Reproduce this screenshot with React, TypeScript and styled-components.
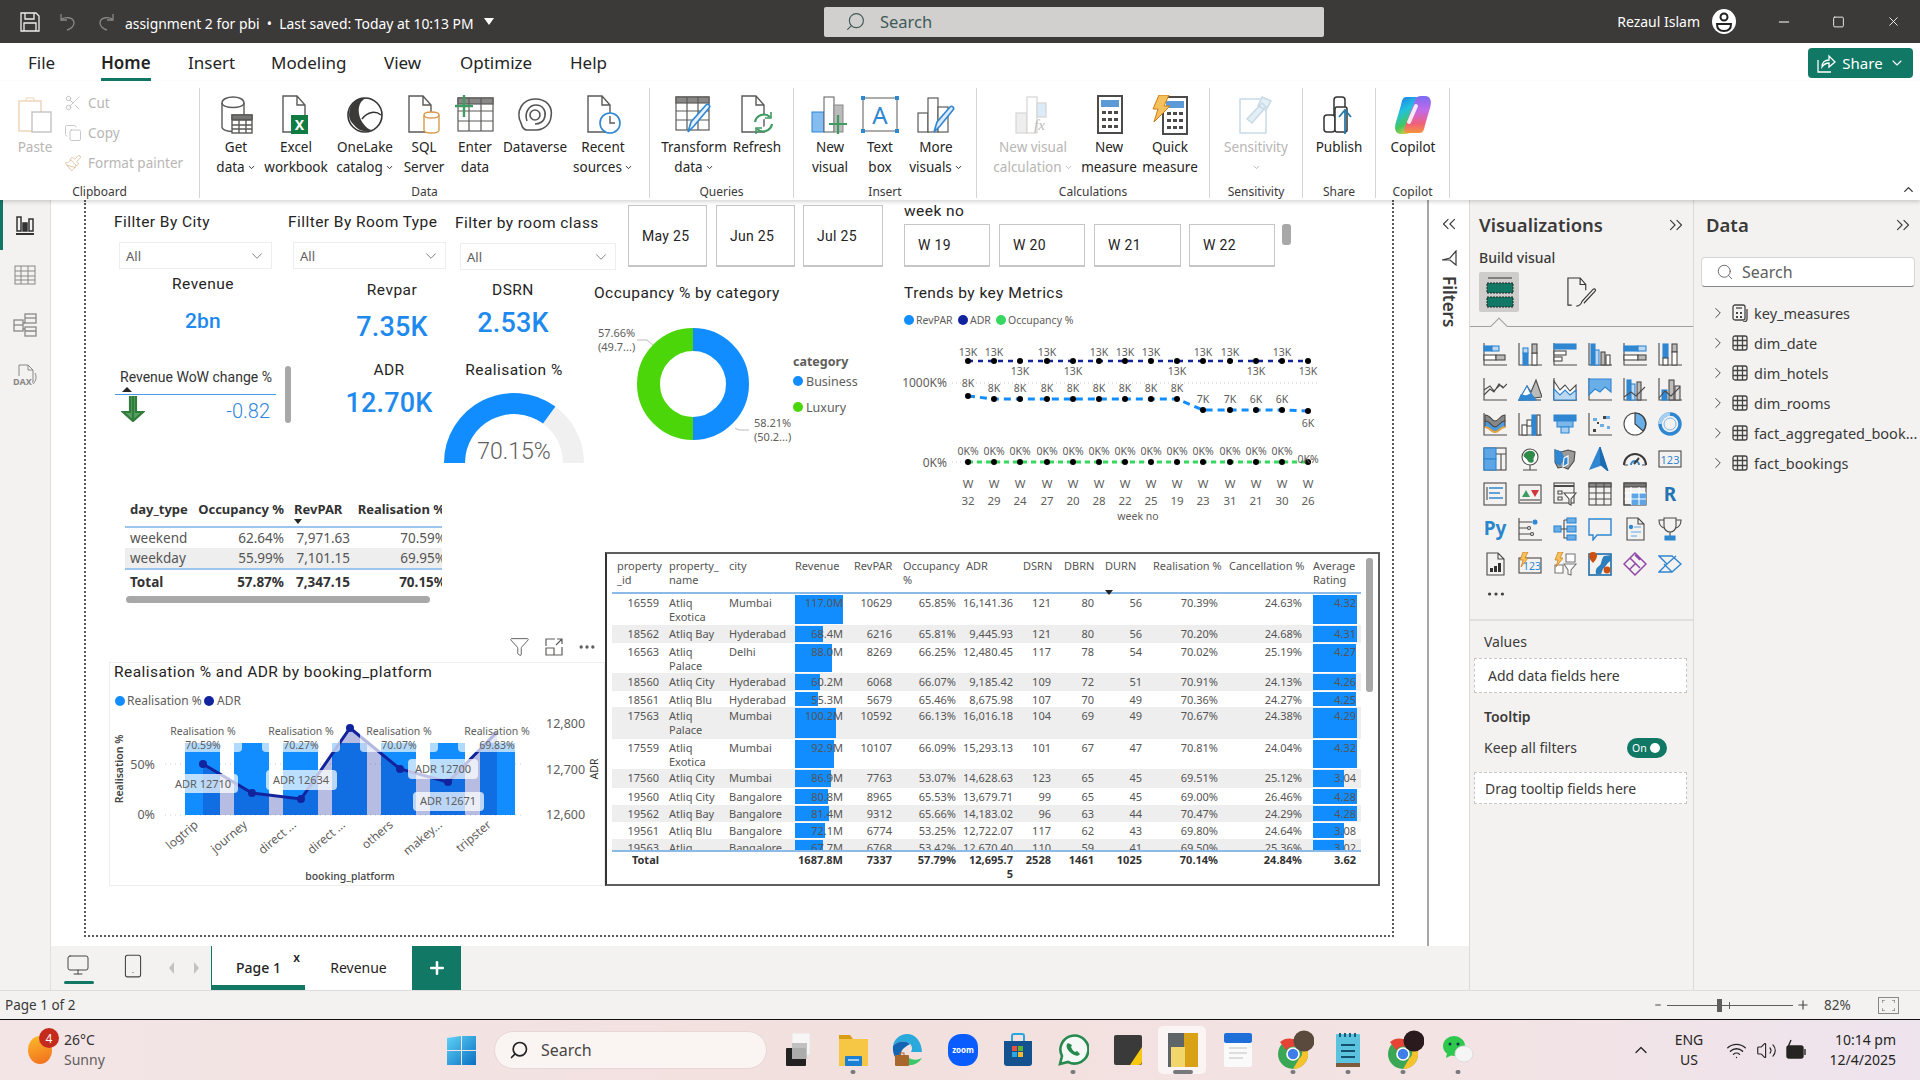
import React from "react";
import styled, { createGlobalStyle } from "styled-components";
import { Search, ChevronDown, ChevronRight, ChevronsRight, ChevronsLeft, ChevronUp, Funnel, Plus, Scissors, Copy, Paintbrush, Monitor, Smartphone, Wifi, Volume2, Minus, X, Square, Ellipsis } from "lucide-react";

const UI = `"Noto Sans","Open Sans","Liberation Sans",sans-serif`;
const DIN = `Roboto,"Liberation Sans",sans-serif`;
const GREEN = "#117865";
const BLUE = "#118dff";

const Global = createGlobalStyle`
  html,body{margin:0;padding:0;width:1920px;height:1080px;overflow:hidden;background:#fff;font-family:${UI};color:#252423;}
  *{box-sizing:border-box;}
`;
const Shell = styled.div`width:1920px;height:1080px;display:flex;flex-direction:column;overflow:hidden;`;

/* Title bar */
const TitleBar = styled.header`height:43px;flex:none;background:#3b3a39;display:flex;align-items:center;color:#fff;`;
const TitleLeft = styled.div`width:824px;flex:none;display:flex;align-items:center;padding-left:20px;`;
const DocTitle = styled.span`font-size:13.9px;margin-left:10px;margin-top:4px;white-space:nowrap;width:350px;`;
const Caret = styled.span`margin-left:9px;width:0;height:0;border-left:5px solid transparent;border-right:5px solid transparent;border-top:7px solid #fff;`;
const QAT = styled.span<{ $ml: number; $w: number }>`display:flex;margin-left:${p => p.$ml}px;width:${p => p.$w}px;flex:none;`;
const TitleSearch = styled.div`width:500px;height:30px;flex:none;background:#d2d0ce;border-radius:2px;display:flex;align-items:center;padding-left:21px;gap:14px;color:#3f5a58;font-size:16.5px;`;
const TitleRight = styled.div`flex:1;display:flex;align-items:center;justify-content:flex-end;padding-right:19px;`;
const UserName = styled.span`font-size:14px;margin-right:12px;white-space:nowrap;`;
const Avatar = styled.span`width:24px;height:25px;border-radius:50%;background:#fff;display:flex;align-items:center;justify-content:center;margin-right:40px;`;
const WinBtn = styled.span<{ $w: number; $mr: number }>`width:${p => p.$w}px;margin-right:${p => p.$mr}px;display:flex;justify-content:center;color:#fff;`;

/* Tabs */
const TabsRow = styled.nav`height:38px;flex:none;background:#fff;display:flex;padding-left:28px;`;
const Tab = styled.div<{ $w: number }>`width:${p => p.$w}px;flex:none;`;
const TabLabel = styled.span<{ $on?: boolean }>`display:inline-block;height:38px;line-height:40px;font-size:17px;color:#252423;font-weight:${p => (p.$on ? 600 : 400)};border-bottom:3px solid ${p => (p.$on ? GREEN : "transparent")};`;
const ShareBtn = styled.div`margin-left:auto;margin-right:7px;margin-top:5px;width:105px;height:30px;background:${GREEN};border-radius:4px;color:#fff;display:flex;align-items:center;justify-content:center;gap:6px;font-size:15px;`;

/* Ribbon */
const Ribbon = styled.section`height:119px;flex:none;background:#fff;display:flex;padding-top:7px;position:relative;z-index:2;box-shadow:0 2px 4px rgba(0,0,0,.16);`;
const Group = styled.div<{ $w: number; $pad?: number }>`width:${p => p.$w}px;flex:none;height:110px;border-right:1px solid #d6d4d2;display:flex;flex-direction:column;padding-left:${p => p.$pad ?? 6}px;`;
const GroupItems = styled.div`flex:1;display:flex;`;
const GroupLabel = styled.div`height:12px;line-height:12px;text-align:center;font-size:12px;color:#3b3a39;margin-left:-6px;`;
const RItem = styled.div<{ $w: number; $off?: boolean }>`width:${p => p.$w}px;flex:none;display:flex;flex-direction:column;align-items:center;padding-top:5px;color:${p => (p.$off ? "#b8b6b4" : "#252423")};`;
const RIcon = styled.div`height:44px;display:flex;align-items:center;justify-content:center;`;
const RLine = styled.div`height:20px;line-height:20px;font-size:13.5px;white-space:nowrap;display:flex;align-items:center;gap:2px;`;
const ClipList = styled.div`display:flex;flex-direction:column;`;
const ClipRow = styled.div`height:30px;display:flex;align-items:center;gap:6px;font-size:13.5px;color:#b8b6b4;white-space:nowrap;`;
const Collapse = styled.div`position:absolute;right:4px;bottom:3px;color:#323130;display:flex;`;

/* Body */
const Body = styled.main`height:790px;flex:none;display:flex;`;
const Rail = styled.aside`width:51px;flex:none;background:#f3f2f1;border-right:1px solid #e1dfdd;display:flex;flex-direction:column;`;
const RailItem = styled.div<{ $on?: boolean }>`height:50px;display:flex;align-items:center;justify-content:center;border-left:3px solid ${p => (p.$on ? GREEN : "transparent")};padding-right:3px;`;
const Center = styled.div`width:1418px;flex:none;display:flex;flex-direction:column;`;
const CanvasRow = styled.div`height:746px;display:flex;`;
const Canvas = styled.div`flex:1;background:#fff;padding-left:33px;overflow:hidden;`;
const Page = styled.div`width:1310px;height:737px;position:relative;border:2px dotted #5a5a5a;border-top:none;background:#fff;`;
const FilterPane = styled.div`width:42px;flex:none;background:#fff;border-left:2px solid #a8a6a4;display:flex;flex-direction:column;align-items:center;padding-top:13px;color:#3b3a39;`;
const FilterText = styled.div`writing-mode:vertical-rl;font-size:17px;font-weight:600;margin-top:10px;line-height:20px;`;
const FilterIcon = styled.div`margin-top:15px;display:flex;`;

/* Page tabs */
const PageBar = styled.div`height:44px;flex:none;background:#f3f2f1;display:flex;`;
const DeviceBtn = styled.div<{ $w: number; $on?: boolean }>`width:${p => p.$w}px;flex:none;display:flex;flex-direction:column;align-items:center;padding-top:7px;position:relative;`;
const DeviceMark = styled.span`position:absolute;left:13px;top:35px;height:3px;width:30px;background:${GREEN};border-radius:2px;`;
const Arrow = styled.span<{ $flip?: boolean; $w: number }>`width:${p => p.$w}px;flex:none;display:flex;align-items:center;justify-content:center;&::after{content:"";border-top:6px solid transparent;border-bottom:6px solid transparent;${p => (p.$flip ? "border-left:5px solid #c4c2c0;" : "border-right:5px solid #c4c2c0;")}}`;
const PageTab = styled.div<{ $w: number; $on?: boolean }>`width:${p => p.$w}px;flex:none;background:#fff;position:relative;display:flex;align-items:center;justify-content:center;font-size:14px;padding-top:4px;font-weight:${p => (p.$on ? 500 : 400)};border-left:${p => (p.$on ? `1px solid ${GREEN}` : "none")};border-bottom:5px solid ${p => (p.$on ? GREEN : "#fff")};`;
const TabClose = styled.span`position:absolute;right:5px;top:3px;font-size:12px;font-weight:600;`;
const AddTab = styled.div`width:49px;flex:none;background:${GREEN};color:#fff;display:flex;align-items:center;justify-content:center;`;

/* Viz pane */
const VizPane = styled.aside`width:225px;flex:none;background:#f3f2f1;border-left:1px solid #dcdad8;border-right:1px solid #dcdad8;padding-top:13px;display:flex;flex-direction:column;`;
const PaneHead = styled.div<{ $pl: number }>`height:24px;display:flex;justify-content:space-between;align-items:center;padding:0 6px 0 ${p => p.$pl}px;font-size:18.5px;font-weight:600;color:#3b3a39;line-height:24px;`;
const SubHead = styled.div`font-size:14px;font-weight:500;color:#3b3a39;margin:11px 0 0 9px;height:20px;line-height:20px;`;
const BuildRow = styled.div`display:flex;margin:4px 0 0 9px;height:40px;`;
const BuildOn = styled.div`width:40px;height:40px;background:#cfcdcb;border-radius:2px;display:flex;align-items:center;justify-content:center;`;
const BuildDoc = styled.div`width:30px;height:40px;margin-left:48px;display:flex;align-items:center;`;
const Notch = styled.div`height:15px;margin-top:0;position:relative;border-bottom:1px solid #a19f9d;&::after{content:"";position:absolute;left:23px;top:8px;width:11px;height:11px;background:#f3f2f1;border-left:1px solid #a19f9d;border-top:1px solid #a19f9d;transform:rotate(45deg);}`;
const VizGrid = styled.div`margin:15px 0 0 13px;display:grid;grid-template-columns:repeat(6,35px);grid-auto-rows:35px;`;
const VizCell = styled.div`display:flex;`;
const More = styled.div`height:14px;margin-left:15px;margin-top:0;color:#3b3a39;display:flex;align-items:center;`;
const Divider = styled.div`height:20px;border-bottom:2px solid #e1dfdd;`;
const WellLabel = styled.div<{ $b?: boolean; $mt: number }>`margin:${p => p.$mt}px 0 0 14px;font-size:14px;height:20px;line-height:20px;font-weight:${p => (p.$b ? 600 : 400)};color:#3b3a39;`;
const Well = styled.div<{ $h: number; $pl: number; $mt: number }>`margin:${p => p.$mt}px 6px 0 4px;height:${p => p.$h}px;border:1px dashed #c8c6c4;background:#fff;font-size:14px;display:flex;align-items:center;padding-left:${p => p.$pl}px;color:#3b3a39;`;
const KeepRow = styled.div`margin:10px 26px 0 14px;height:21px;display:flex;align-items:center;justify-content:space-between;font-size:14px;color:#3b3a39;`;
const Toggle = styled.div`width:40px;height:20px;border-radius:10px;background:${GREEN};color:#fff;font-size:10.5px;display:flex;align-items:center;padding-left:5px;gap:3px;&::after{content:"";width:10px;height:10px;border-radius:50%;background:#fff;}`;

/* Data pane */
const DataPane = styled.aside`flex:1;background:#f3f2f1;padding-top:13px;display:flex;flex-direction:column;`;
const DataSearch = styled.div`margin:20px 5px 0 7px;height:30px;border:1px solid #d8d6d4;border-bottom-color:#8a8886;border-radius:4px;background:#fff;display:flex;align-items:center;padding-left:14px;gap:8px;color:#605e5c;font-size:16px;`;
const TreeList = styled.div`margin-top:11px;display:flex;flex-direction:column;padding-left:15px;`;
const TreeRow = styled.div`height:30px;display:flex;align-items:center;font-size:14.5px;color:#3b3a39;white-space:nowrap;`;
const TreeIcon = styled.span`margin-left:5px;display:flex;`;
const TreeText = styled.span`margin-left:6px;`;

/* Status + taskbar */
const StatusBar = styled.footer`height:30px;flex:none;background:#f3f2f1;border-top:1px solid #dfdddb;border-bottom:1px solid #111;display:flex;align-items:center;padding-left:5px;font-size:13.5px;color:#3b3a39;`;
const Zoomer = styled.div`margin-left:auto;display:flex;align-items:center;color:#484644;`;
const SliderTrack = styled.div`width:126px;height:1px;background:#605e5c;margin:0 3px 0 5px;position:relative;&::before{content:"";position:absolute;left:50px;top:-6px;width:5px;height:13px;background:#605e5c;}&::after{content:"";position:absolute;left:62px;top:-3px;width:1px;height:7px;background:#605e5c;}`;
const FitBox = styled.div`width:21px;height:17px;margin:0 21px 0 26px;border:1px solid #8a8886;background:#f3f2f1;display:flex;align-items:center;justify-content:center;`;
const Pct = styled.span`margin-left:14px;width:28px;font-size:13.5px;white-space:nowrap;`;
const Taskbar = styled.div`height:60px;flex:none;background:linear-gradient(90deg,#f3e5e6,#f2e0de 45%,#f3e3e3 75%,#eee4ee);display:flex;align-items:center;`;
const Weather = styled.div`width:447px;flex:none;display:flex;align-items:center;padding-left:28px;position:relative;`;
const Sun = styled.span`width:24px;height:28px;border-radius:50%;background:linear-gradient(160deg,#fbbd2c,#f26a1b);position:relative;display:block;`;
const Badge = styled.span`position:absolute;left:11px;top:-8px;width:20px;height:20px;border-radius:50%;background:#c42b1c;color:#fff;font-size:12px;display:flex;align-items:center;justify-content:center;`;
const WeatherText = styled.div`margin-left:12px;font-size:14px;line-height:20px;color:#323130;`;
const Muted = styled.div`color:#605e5c;`;
const StartBtn = styled.div`width:47px;flex:none;display:flex;`;
const SearchPill = styled.div`width:273px;height:38px;flex:none;margin-right:3px;border-radius:19px;background:#faf4f3;border:1px solid #e6d8d6;display:flex;align-items:center;padding-left:14px;gap:12px;font-size:16px;color:#484644;`;
const TaskIcon = styled.div<{ $active?: boolean }>`width:55px;height:60px;flex:none;display:flex;align-items:center;justify-content:center;position:relative;&::before{content:"";position:absolute;left:3px;right:4px;top:6px;bottom:6px;border-radius:5px;background:${p => (p.$active ? "rgba(255,255,255,.62)" : "transparent")};}> svg{position:relative;}`;
const RunDot = styled.span<{ $active?: boolean }>`position:absolute;bottom:6px;left:50%;transform:translateX(-50%);height:4px;width:${p => (p.$active ? 20 : 5)}px;border-radius:3px;background:#77797c;`;
const Tray = styled.div`margin-left:auto;display:flex;align-items:center;padding-right:24px;color:#252423;`;
const TrayLang = styled.div`width:48px;margin:0 8px 0 14px;text-align:center;font-size:14px;line-height:20px;`;
const TraySlot = styled.div<{ $w: number }>`width:${p => p.$w}px;display:flex;justify-content:center;`;
const Clock = styled.div`margin-left:15px;text-align:right;font-size:14px;line-height:20px;width:70px;white-space:nowrap;`;

/* Canvas visuals: free canvas placement */
const Visual = styled.div<{ $x: number; $y: number; $w: number; $h?: number }>`position:absolute;left:${p => p.$x - 86}px;top:${p => p.$y - 200}px;width:${p => p.$w}px;${p => (p.$h ? `height:${p.$h}px;` : "")}`;
const Heading = styled.div<{ $center?: boolean }>`font-family:${DIN};font-size:15.5px;line-height:20px;color:#252423;letter-spacing:.45px;white-space:nowrap;font-weight:400;text-align:${p => (p.$center ? "center" : "left")};`;
const Dropdown = styled.div`height:27px;border:1px solid #eeeeee;display:flex;align-items:center;justify-content:space-between;padding:0 5px 0 6px;font-size:13px;color:#605e5c;`;
const BigValue = styled.div<{ $size: number }>`font-family:${DIN};font-size:${p => p.$size}px;font-weight:500;color:#1f8aee;text-align:center;line-height:1.1;white-space:nowrap;letter-spacing:.2px;`;
const Chip = styled.div`height:100%;border:1px solid #c8c6c4;border-bottom-width:2px;background:#fff;display:flex;align-items:center;padding-left:13px;font-family:${DIN};font-size:14px;color:#252423;letter-spacing:.3px;`;
const WowTitle = styled.div`font-family:${DIN};font-size:14px;line-height:18px;color:#333;padding-left:5px;white-space:nowrap;`;
const WowRow = styled.div`border-top:1px solid #4c9be8;margin-top:8px;height:28px;display:flex;justify-content:space-between;padding:1px 6px 0 6px;font-family:${DIN};font-size:20px;font-weight:300;color:#2f86d8;line-height:30px;`;
const WowUp = styled.span`position:absolute;left:7px;top:19px;width:0;height:0;border-left:5px solid transparent;border-right:5px solid transparent;border-bottom:5px solid #252423;`;
const ThumbV = styled.div`width:100%;height:100%;background:#a8a8a8;border-radius:3px;`;

const SmallWrap = styled.div`width:317px;overflow:hidden;font-size:13.5px;color:#484644;`;
const SmallRow = styled.div<{ $alt?: boolean; $h: number; $line?: boolean; $pb?: number }>`display:grid;grid-template-columns:73px 91px 66px 92px;width:322px;height:${p => p.$h}px;align-items:center;padding-bottom:${p => p.$pb ?? 0}px;background:${p => (p.$alt ? "#eeeeee" : "transparent")};border-bottom:${p => (p.$line ? "2px solid #9cc6ee" : "none")};`;
const SmallCell = styled.div<{ $r?: boolean; $b?: boolean; $pr?: number; $fs?: number }>`white-space:nowrap;position:relative;font-size:${p => p.$fs ?? 13.5}px;padding:${p => (p.$r ? `0 ${p.$pr ?? 5}px 0 0` : "0 0 0 5px")};text-align:${p => (p.$r ? "right" : "left")};font-weight:${p => (p.$b ? 700 : 400)};color:${p => (p.$b ? "#333" : "#555")};`;
const SortMark = styled.span`position:absolute;left:5px;bottom:-6px;width:0;height:0;border-left:4px solid transparent;border-right:4px solid transparent;border-top:5px solid #252423;`;
const HScroll = styled.div`height:7px;width:304px;margin:3px 0 0 1px;border-radius:4px;background:#a8a8a8;`;

const BigTable = styled.div`width:100%;height:100%;border:2px solid #5f5f5f;border-left-color:#333;padding-left:5px;font-size:11px;color:#555;position:relative;background:#fff;`;
const BigRow = styled.div<{ $h: number; $alt?: boolean }>`display:grid;grid-template-columns:49px 64px 70px 50px 52px 64px 57px 38px 43px 48px 76px 90px 48px;width:749px;height:${p => p.$h}px;background:${p => (p.$alt ? "#eeeeee" : "transparent")};line-height:14px;`;
const BigHead = styled(BigRow)`padding-top:5px;border-bottom:2px solid #8bb9e8;`;
const BigCell = styled.div<{ $pl?: number; $pr?: number; $r?: boolean; $b?: boolean }>`position:relative;padding:${p => (p.$b ? 0 : 2)}px ${p => p.$pr ?? 0}px 0 ${p => p.$pl ?? 0}px;text-align:${p => (p.$r ? "right" : "left")};font-weight:${p => (p.$b ? 700 : 400)};color:${p => (p.$b ? "#333" : "#555")};white-space:pre-line;overflow:hidden;`;
const HeadCell = styled.div<{ $pl: number }>`padding-left:${p => p.$pl}px;position:relative;white-space:pre-line;`;
const BigBody = styled.div`height:256px;overflow:hidden;`;
const BigTotal = styled(BigRow)`border-top:2px solid #8bb9e8;padding-top:1px;`;
const DataBar = styled.span`position:absolute;left:0;top:1px;bottom:1px;background:${BLUE};`;
const CellText = styled.span`position:relative;`;
const DurnMark = styled.span`position:absolute;left:6px;top:31px;width:0;height:0;border-left:4px solid transparent;border-right:4px solid transparent;border-top:5px solid #252423;`;

const ChartSvg = styled.svg`display:block;overflow:visible;text{font-family:${UI};fill:#605e5c;}`;
const VizIconsRow = styled.div`display:flex;align-items:center;justify-content:space-between;color:#605e5c;`;
const ComboBox = styled.div`width:100%;height:100%;border:1px solid #eeeeee;`;

const st = "#5b5a58";
const blue = "#2f86d1";

const SaveIco = () => <svg width="20" height="20" viewBox="0 0 20 20" fill="none" stroke="#eee" strokeWidth="1.3"><path d="M1 1h15l3 3v15H1z" /><path d="M5 1v6h9V1M4 19v-8h12v8" /></svg>;
const UndoIco = () => <svg width="16" height="18" viewBox="0 0 16 18" fill="none" stroke="#8a8886" strokeWidth="1.3"><path d="M1 1v6h6M1 7c3-4 13-3 13 3 0 3-3 6-7 7" /></svg>;
const RedoIco = () => <svg width="18" height="18" viewBox="0 0 16 18" fill="none" stroke="#8a8886" strokeWidth="1.3"><path d="M15 1v6H9M15 7C12 3 2 4 2 10c0 3 3 6 7 7" /></svg>;
const AvatarIco = () => <svg width="20" height="22" viewBox="0 0 20 22" fill="none" stroke="#222" strokeWidth="2"><circle cx="10" cy="6" r="3.5" /><path d="M3 13h14c0 5-3 7-7 7s-7-2-7-7z" /></svg>;
const ShareIco = () => <svg width="20" height="20" viewBox="0 0 20 20" fill="none" stroke="#fff" strokeWidth="1.3"><path d="M2 7v12h13M6 14c0-5 3-7 7-7V3l6 6-6 5v-4c-3 0-5 1-7 4z" /></svg>;

const PasteIco = () => <svg width="36" height="38" viewBox="0 0 36 38" fill="none"><path d="M2 5h22v30H2z" stroke="#edd5b8" strokeWidth="1.5" /><path d="M9 5V2h8v3" stroke="#edd5b8" /><rect x="15" y="16" width="19" height="20" fill="#fff" stroke="#c8c6c4" strokeWidth="1.5" /></svg>;
const Doc = () => <path d="M5 1h14l8 9v27H5zM19 1v9h8" fill="#fff" stroke={st} strokeWidth="1.4" />;
const GetDataIco = () => <svg width="40" height="40" viewBox="0 0 40 40" fill="none" stroke={st} strokeWidth="1.4"><path d="M6 8c0-8 22-8 22 0v24c0 6-22 6-22 0z" fill="#fff" /><path d="M6 8c0 6 22 6 22 0" /><rect x="16" y="20" width="20" height="18" fill="#fff" /><path d="M16 25h20M16 30h20M16 34h20M23 20v18M30 20v18" /><rect x="16" y="20" width="20" height="4.5" fill="#777" /></svg>;
const ExcelIco = () => <svg width="40" height="40" viewBox="0 0 40 40"><g transform="translate(2 0)"><Doc /></g><rect x="15" y="20" width="17" height="19" fill="#107c41" /><text x="23.5" y="35" textAnchor="middle" fill="#fff" fontSize="14" fontFamily={UI} fontWeight="700">X</text></svg>;
const OneLakeIco = () => <svg width="40" height="40" viewBox="0 0 40 40" fill="none"><circle cx="20" cy="20" r="17" fill="#fff" stroke="#333" strokeWidth="1.6" /><path d="M4 20C4 8 13 3 21 3c-8 4-9 13-5 22 3 6 8 10 11 10-8 3-14 0-18-5-3-3-5-6-5-10z" fill="#3b3a39" /><path d="M17 24c6-8 14-8 19-4" stroke="#333" strokeWidth="1.5" /></svg>;
const SqlIco = () => <svg width="40" height="40" viewBox="0 0 40 40" fill="none"><g transform="translate(0 0)"><Doc /></g><path d="M20 20c0-4 15-4 15 0v15c0 4-15 4-15 0z" fill="#fff" stroke="#d99a4a" strokeWidth="1.4" /><path d="M20 20c0 4 15 4 15 0" stroke="#d99a4a" strokeWidth="1.4" /></svg>;
const EnterIco = () => <svg width="40" height="40" viewBox="0 0 40 40" fill="none" stroke={st} strokeWidth="1.2"><rect x="3" y="3" width="35" height="33" fill="#fff" /><rect x="3" y="3" width="35" height="6" fill="#8a8886" /><path d="M3 16h35M3 26h35M14 3v33M26 3v33" /><path d="M9 0v22M0 11h18" stroke="#3f9b62" strokeWidth="2.4" /></svg>;
const DataverseIco = () => <svg width="40" height="40" viewBox="0 0 40 40" fill="none" stroke="#555" strokeWidth="1.6"><path d="M6 28C0 16 8 4 20 4c12 0 18 8 16 18-1 8-8 13-14 13H12c-3 0-5-3-6-7z" /><path d="M12 26c-3-8 2-16 9-16s10 6 9 11c-1 6-6 8-10 8" /><circle cx="20" cy="20" r="5" /></svg>;
const RecentIco = () => <svg width="40" height="40" viewBox="0 0 40 40" fill="none"><Doc /><circle cx="27" cy="28" r="10" fill="#fff" stroke={blue} strokeWidth="1.6" /><path d="M27 21v7h5" stroke={st} strokeWidth="1.4" /></svg>;
const TransformIco = () => <svg width="40" height="40" viewBox="0 0 40 40" fill="none" stroke={st} strokeWidth="1.2"><rect x="2" y="2" width="33" height="33" fill="#fff" /><rect x="2" y="2" width="33" height="6" fill="#8a8886" /><path d="M2 16h33M2 25h33M13 2v33M24 2v33" /><path d="M14 37l3-10 15-17c2-2 5 1 3 3L20 31z" fill="#e6f1fb" stroke={blue} strokeWidth="1.6" /></svg>;
const RefreshIco = () => <svg width="40" height="40" viewBox="0 0 40 40" fill="none"><Doc /><path d="M18 27a9 9 0 0 1 15-5M35 29a9 9 0 0 1-15 5" stroke="#3f9b62" strokeWidth="2.2" fill="#fff" /><path d="M34 17v6h-6M19 39v-6h6" stroke="#3f9b62" strokeWidth="1.6" /></svg>;
const NewVisualIco = () => <svg width="40" height="40" viewBox="0 0 40 40" fill="none"><rect x="2" y="17" width="12" height="20" fill="#86bdf0" stroke={blue} /><rect x="14" y="2" width="10" height="35" fill="#fff" stroke={st} /><rect x="24" y="10" width="9" height="27" fill="#bbb" stroke="#888" /><path d="M28 20v19M19 29h18" stroke="#3f9b62" strokeWidth="2.2" /></svg>;
const TextBoxIco = () => <svg width="40" height="40" viewBox="0 0 40 40" fill="none"><rect x="3" y="3" width="34" height="33" fill="#fff" stroke={st} /><path d="M1 1h4v4H1zM35 1h4v4h-4zM1 34h4v4H1zM35 34h4v4h-4z" fill={blue} /><text x="20" y="29" textAnchor="middle" fontSize="24" fill={blue} fontFamily={UI}>A</text></svg>;
const MoreVisIco = () => <svg width="40" height="40" viewBox="0 0 40 40" fill="none" stroke={st} strokeWidth="1.2"><rect x="2" y="18" width="10" height="19" fill="#fff" /><rect x="12" y="3" width="10" height="34" fill="#fff" /><rect x="22" y="12" width="10" height="25" fill="#fff" /><path d="M18 37l3-10 13-15c2-2 5 1 3 3L24 31z" fill="#dbeafa" stroke={blue} strokeWidth="1.6" /></svg>;
const CalcVisIco = () => <svg width="40" height="40" viewBox="0 0 40 40" fill="none" stroke="#d8d6d4" strokeWidth="1.2"><rect x="3" y="18" width="11" height="20" fill="#eee" /><rect x="14" y="2" width="10" height="36" fill="#fff" /><rect x="24" y="8" width="9" height="14" fill="#dcebf9" /><text x="21" y="35" fontSize="15" fill="#bbb" stroke="none" fontStyle="italic" fontFamily="Liberation Serif">fx</text></svg>;
const Calc = () => <><rect x="9" y="1" width="24" height="37" fill="#fff" stroke="#4c4b4a" strokeWidth="2" /><rect x="12" y="5" width="18" height="7" fill="#5a9ad6" /><path d="M13 16h4v3h-4zM19 16h4v3h-4zM25 16h4v3h-4zM13 23h4v3h-4zM19 23h4v3h-4zM25 23h4v3h-4zM13 30h4v3h-4zM19 30h4v3h-4zM25 30h4v3h-4z" fill="#4c4b4a" /></>;
const NewMeasureIco = () => <svg width="40" height="40" viewBox="0 0 40 40"><Calc /></svg>;
const QuickIco = () => <svg width="40" height="40" viewBox="0 0 40 40"><g transform="translate(4 1)"><Calc /></g><path d="M9 0h10l-5 11h6L4 27l4-13H3z" fill="#f5c15c" stroke="#cc7a14" /></svg>;
const SensIco = () => <svg width="40" height="40" viewBox="0 0 40 40" fill="none" stroke="#c7dbe6" strokeWidth="1.5"><rect x="4" y="4" width="26" height="34" /><path d="M11 24L26 8l4 4-14 16zM26 2l9 4-5 9-8-4z" fill="#e3eef5" /></svg>;
const PublishIco = () => <svg width="40" height="40" viewBox="0 0 40 40" fill="none" stroke="#333" strokeWidth="1.5"><rect x="15" y="2" width="11" height="34" rx="3" fill="#fff" /><rect x="5" y="20" width="11" height="17" rx="3" fill="#fff" /><rect x="16" y="12" width="12" height="25" rx="2" fill="#fff" /><path d="M26 39V15M20 22l6-7 6 7" stroke="#2a7aa8" strokeWidth="1.8" /></svg>;
const CopilotIco = () => <svg width="40" height="40" viewBox="0 0 40 40"><defs><linearGradient id="cp1" x1="0.2" y1="0" x2="0.6" y2="1"><stop offset="0" stopColor="#1f7fe8" /><stop offset=".35" stopColor="#21c0e0" /><stop offset=".7" stopColor="#46c85a" /><stop offset="1" stopColor="#f5d03c" /></linearGradient><linearGradient id="cp2" x1="0.5" y1="0" x2="0.5" y2="1"><stop offset="0" stopColor="#7a6cf0" /><stop offset=".4" stopColor="#c46ae8" /><stop offset=".75" stopColor="#f0607a" /><stop offset="1" stopColor="#f5953c" /></linearGradient></defs><path d="M13 2h13c4 0 3 4 1 9L18 35c-1 3-3 4-6 4H8C2 39 1 33 3 27L8 10c1-5 2-8 5-8z" fill="url(#cp1)" /><path d="M27 38H14c-4 0-3-4-1-9l9-24c1-3 3-4 6-4h4c6 0 7 6 5 12l-5 17c-1 5-2 8-5 8z" fill="url(#cp2)" /><path d="M16 27l7-16" stroke="#fff" strokeOpacity=".85" strokeWidth="4" strokeLinecap="round" /></svg>;

const ReportIco = () => <svg width="22" height="22" viewBox="0 0 22 22" fill="none" stroke="#333" strokeWidth="1.5"><path d="M2 20h18" strokeWidth="2" /><rect x="3" y="3" width="4" height="14" /><rect x="9" y="9" width="4" height="8" fill="#333" /><rect x="15" y="5" width="4" height="12" /></svg>;
const TableIco = () => <svg width="24" height="22" viewBox="0 0 24 22" fill="none" stroke="#8a8886"><rect x="2" y="2" width="20" height="18" /><path d="M2 7h20M2 12h20M2 16h20M8 2v18M15 2v18" /></svg>;
const ModelIco = () => <svg width="26" height="26" viewBox="0 0 26 26" fill="none" stroke="#8a8886" strokeWidth="1.3"><rect x="2" y="8" width="9" height="11" /><path d="M2 13h9" /><rect x="13" y="2" width="11" height="9" /><path d="M13 6h11" /><rect x="13" y="15" width="11" height="9" /><path d="M13 19h11M11 11h2M11 17h2" /></svg>;
const DaxIco = () => <svg width="26" height="24" viewBox="0 0 26 24" fill="none" stroke="#8a8886"><path d="M7 13V2h9l5 5v12h-1M16 2v5h5M23 10c2 4 1 8-2 11" /><text x="1" y="22" fontSize="9" fontWeight="700" fill="#8a8886" stroke="none" fontFamily={UI}>DAX</text></svg>;

type VB = React.ReactNode;
const V = ({ children }: { children: VB }) => <svg width="24" height="24" viewBox="0 0 24 24" fill="none" stroke="#4b4a48" strokeWidth="1.1">{children}</svg>;
const Ax = () => <path d="M1 1v22h23" />;
const LB = "#bcd7f0";
const viz: VB[] = [
  <><Ax /><rect x="1" y="4" width="8" height="5" fill={blue} stroke={blue} /><rect x="9" y="4" width="7" height="5" fill={LB} stroke={blue} /><rect x="1" y="13" width="12" height="5" fill="#fff" /><rect x="13" y="13" width="9" height="5" fill="#bbb" /></>,
  <><Ax /><rect x="5" y="11" width="5" height="12" fill={blue} stroke={blue} /><rect x="5" y="6" width="5" height="5" fill={LB} stroke={blue} /><rect x="14" y="11" width="5" height="12" fill="#fff" /><rect x="14" y="2" width="5" height="9" fill="#bbb" /></>,
  <><Ax /><rect x="1" y="2" width="22" height="5" fill={blue} stroke={blue} /><rect x="1" y="9" width="12" height="4" fill="#fff" /><rect x="1" y="15" width="8" height="4" fill="#fff" /></>,
  <><Ax /><rect x="3" y="2" width="4" height="21" fill={blue} stroke={blue} /><rect x="7" y="8" width="4" height="15" fill={LB} stroke={blue} /><rect x="13" y="10" width="4" height="13" fill="#bbb" /><rect x="18" y="13" width="4" height="10" fill="#fff" /></>,
  <><Ax /><rect x="1" y="4" width="14" height="5" fill={blue} stroke={blue} /><rect x="15" y="4" width="8" height="5" fill={LB} stroke={blue} /><rect x="1" y="13" width="14" height="5" fill="#fff" /><rect x="15" y="13" width="8" height="5" fill="#bbb" /></>,
  <><Ax /><rect x="5" y="2" width="5" height="14" fill={blue} stroke={blue} /><rect x="5" y="16" width="5" height="7" fill="#fff" /><rect x="14" y="2" width="5" height="8" fill="#bbb" /><rect x="14" y="10" width="5" height="13" fill="#fff" /></>,
  <><Ax /><path d="M1 18l6-6 4 3 5-8 4 4 4-4M1 13l6-4 4 5 6-6 3 2" /></>,
  <><path d="M1 23h22" /><path d="M1 23l8-14 4 6 5-12 6 17z" fill="#bbb" /><path d="M1 23L9 9l7 14z" fill="#fff" stroke={blue} /><path d="M1 23h17l-5-6-5 2-5-1z" fill={blue} stroke={blue} /></>,
  <><Ax /><path d="M1 4l6 9 5-5 5 6 6-6v15H1z" fill="#fff" /><path d="M1 12l6 6 5-5 5 5 6-5v10H1z" fill={LB} stroke={blue} /></>,
  <><Ax /><path d="M1 2h22v13l-6-5-5 5-5-3-6 6z" fill="#6aaee8" stroke={blue} /></>,
  <><Ax /><rect x="4" y="3" width="4" height="20" fill={blue} stroke={blue} /><rect x="8" y="7" width="4" height="16" fill={LB} stroke={blue} /><rect x="14" y="5" width="4" height="18" fill="#bbb" /><path d="M1 20l7-5 5 4 9-9" /></>,
  <><Ax /><rect x="4" y="13" width="5" height="10" fill={blue} stroke={blue} /><rect x="11" y="3" width="5" height="20" fill="#bbb" /><rect x="17" y="9" width="5" height="14" fill="#ddd" /><path d="M1 21l6-7 6 5 9-9" /></>,
  <><Ax /><path d="M2 3c6 0 6 6 10 6s5-6 10-6v6c-5 0-6 6-10 6S8 10 2 9z" fill="#888" /><path d="M2 9c6 0 6 6 10 6s5-6 10-6v6c-5 0-6 5-10 5S8 16 2 15z" fill="#4a9be0" /><path d="M2 15c5 0 6 5 10 5s5-5 10-5" stroke="#e8a33c" strokeWidth="2" /></>,
  <><Ax /><rect x="4" y="13" width="5" height="10" fill="#fff" /><rect x="9" y="8" width="5" height="6" fill="#fff" /><rect x="14" y="3" width="4" height="20" fill={blue} stroke={blue} /><rect x="19" y="3" width="3" height="20" fill="#fff" /></>,
  <><path d="M1 3h22v6H1z" fill={blue} stroke={blue} /><path d="M4 9h16v6H4z" fill="#7db6ea" stroke={blue} /><path d="M8 15h8v6H8z" fill="#a7cff2" stroke={blue} /></>,
  <><Ax /><path d="M5 6h4v3H5zM12 12h4v3h-4zM18 4h4v3h-4zM19 14h3v3h-3z" fill="#6aaee8" stroke="none" /><path d="M5 17h3v3H5zM15 4h3v3h-3zM9 10h2v2H9z" fill="#444" stroke="none" /></>,
  <><circle cx="12" cy="12" r="11" fill="#fff" /><path d="M12 12V1a11 11 0 0 1 8 18z" fill="#6aaee8" stroke="#3b3a39" /></>,
  <><circle cx="12" cy="12" r="10" stroke={blue} strokeWidth="3.4" /><circle cx="12" cy="12" r="6" stroke="#7db6ea" strokeWidth="1" /><path d="M2 12a10 10 0 0 1 10-10" stroke="#a7cff2" strokeWidth="3.4" /></>,
  <><rect x="1" y="1" width="22" height="22" /><rect x="1" y="1" width="12" height="11" fill="#5ea5e6" stroke={blue} /><rect x="1" y="12" width="12" height="11" fill="#5ea5e6" stroke={blue} /><path d="M13 7h10M18 7v16" /></>,
  <><circle cx="12" cy="10" r="8" fill="#fff" /><path d="M6 8c3-4 8-5 10-2s-2 4-1 7-4 3-5 0-4-2-4-5z" fill="#2e8b4a" stroke="#2e8b4a" /><path d="M5 23h14M12 18v5" /></>,
  <><path d="M2 3l6 2 7-2 7 2-1 9-6 8-5-2-5 1-3-6z" fill="#9a9a9a" /><path d="M2 3l6 2 3 6-4 7-4-2z" fill={blue} stroke={blue} /><path d="M11 11l4-2v8l-5 3z" fill={blue} stroke="#fff" /></>,
  <><path d="M12 0L2 22l11-4z" fill={blue} stroke={blue} /><path d="M12 0l8 24-7-6z" fill="#1b6bb0" stroke="#1b6bb0" /></>,
  <><path d="M1 18a11 11 0 0 1 22 0" strokeWidth="2" stroke="#3b3a39" /><path d="M1 18h4M19 18h4" /><path d="M8 18a4 4 0 0 1 8 0" stroke={blue} strokeWidth="2" /><path d="M11 17l5-6" strokeWidth="2" stroke="#3b3a39" /></>,
  <><rect x="1" y="4" width="22" height="16" /><text x="12" y="17" textAnchor="middle" fontSize="11" fill={blue} stroke="none" fontFamily={UI}>123</text></>,
  <><rect x="1" y="1" width="22" height="22" /><path d="M6 6h14M6 11h11M6 16h14" stroke={blue} strokeWidth="1.6" /><path d="M4 5v13" /></>,
  <><rect x="1" y="3" width="22" height="18" /><path d="M2 18h20" /><path d="M8 8l4 7H4z" fill="#3f9b62" stroke="none" /><path d="M13 8h8l-4 7z" fill="#d13438" stroke="none" /></>,
  <><rect x="1" y="1" width="20" height="20" /><path d="M1 4h20" strokeWidth="2" /><path d="M5 9h4v3H5zM5 15h4v3H5z" /><path d="M11 11h12l-5 6v6l-2-1v-5z" fill="#fff" /></>,
  <><rect x="1" y="1" width="22" height="22" /><rect x="1" y="1" width="22" height="4" fill="#8a8886" /><path d="M1 11h22M1 17h22M8 1v22M16 1v22" /></>,
  <><rect x="1" y="1" width="22" height="22" /><rect x="1" y="1" width="22" height="4" fill="#777" /><rect x="8" y="11" width="15" height="12" fill="#5ea5e6" stroke="none" /><path d="M1 11h22M1 17h22M8 5v18M16 5v18" stroke="#fff" /><path d="M1 5v18h7" /></>,
  <text x="12" y="19" textAnchor="middle" fontSize="19" fontWeight="700" fill="#2274b3" stroke="none" fontFamily={UI}>R</text>,
  <text x="12" y="18" textAnchor="middle" fontSize="19" fontWeight="700" fill="#2b86cc" stroke="none" fontFamily={UI}>Py</text>,
  <><Ax /><path d="M1 5h13M1 11h8M1 17h11" /><circle cx="17" cy="5" r="2" fill={blue} stroke={blue} /><circle cx="11" cy="11" r="1.5" /><circle cx="14" cy="17" r="1.5" /></>,
  <><rect x="1" y="9" width="7" height="6" fill="#6aaee8" stroke={blue} /><rect x="14" y="1" width="9" height="5" fill="#6aaee8" stroke={blue} /><rect x="14" y="9" width="9" height="6" fill="#6aaee8" stroke={blue} /><rect x="14" y="18" width="9" height="5" fill="#6aaee8" stroke={blue} /><path d="M8 12h6M11 3v18h3M11 3h3" /></>,
  <path d="M1 2h22v16H9l-4 5v-5H1z" stroke={blue} strokeWidth="1.4" />,
  <><path d="M4 1h11l6 6v16H4zM15 1v6h6" /><circle cx="8" cy="10" r="1.6" fill={blue} stroke={blue} /><path d="M11 10h7M8 15h10M8 19h6" stroke="#5ea5e6" /></>,
  <><path d="M6 1h12v8a6 6 0 0 1-12 0z" /><path d="M6 3H1c0 5 2 7 5 8M18 3h5c0 5-2 7-5 8M12 15v4" /><path d="M7 19h10v4H7z" fill={blue} stroke={blue} /></>,
  <><path d="M4 1h11l6 6v16H4zM15 1v6h6" /><path d="M7 20v-4h3v4zM11 20v-6h3v6zM15 20V11h3v9z" fill="#333" stroke="none" /></>,
  <><rect x="1" y="6" width="22" height="15" /><text x="14" y="18" textAnchor="middle" fontSize="10.5" fill={blue} stroke="none" fontFamily={UI}>123</text><path d="M5 0h5L7 6h3l-7 9 2-7H2z" fill="#f5c15c" stroke="#cc7a14" strokeWidth=".7" /></>,
  <><path d="M13 2h9v8h-9zM2 13h8v8H2zM11 12h12l-5 6v5l-3-1v-4z" stroke="#777" fill="#fff" /><path d="M5 0h5L7 6h3l-7 9 2-7H2z" fill="#f5c15c" stroke="#cc7a14" strokeWidth=".7" /></>,
  <><rect x="1" y="2" width="22" height="21" stroke="#1e6da8" strokeWidth="1.6" /><path d="M8 22c-1-6 2-7 4-9s1-6 4-9l7-1v6c-4 1-5 6-8 8l-2 5z" fill="#2c7fbd" stroke="none" /><circle cx="19" cy="18" r="3.4" fill="#ca5010" stroke="none" /><path d="M5 0a4 4 0 0 1 4 4c0 3-4 7-4 7S1 7 1 4a4 4 0 0 1 4-4z" fill="#ca5010" stroke="none" /></>,
  <path d="M12 1l11 11-11 11L1 12zM7 6l10 10M17 8l-5-5M12 12l-5 5" stroke="#8f47a8" strokeWidth="1.5" />,
  <path d="M1 4h13l9 8-9 8H1l8-8zM9 12l9-8M14 20l-8-8" stroke="#2f86d1" strokeWidth="1.4" />,
];

const DataIco = () => <svg width="16" height="18" viewBox="0 0 16 18" fill="none" stroke="#444" strokeWidth="1.3"><rect x="1" y="2" width="14" height="14" rx="2" /><path d="M1 6.5h14M1 11.5h14M5.5 2v14M10.5 2v14" /></svg>;
const MeasureIco = () => <svg width="16" height="18" viewBox="0 0 16 18" fill="none" stroke="#444" strokeWidth="1.3"><rect x="1" y="1" width="12" height="15" rx="2" /><path d="M4 4h6" /><path d="M4 8h2v2H4zM8 8h2v2H8zM4 12h2v2H4zM8 12h2v2H8z" fill="#444" stroke="none" /><path d="M15 5v10c0 2-2 3-4 3" /></svg>;

const WinIco = () => <svg width="29" height="29" viewBox="0 0 29 29"><defs><linearGradient id="win" x1="0" y1="0" x2="1" y2="1"><stop offset="0" stopColor="#5fd3f7" /><stop offset="1" stopColor="#0a6fc2" /></linearGradient></defs><path d="M0 2l14-2v14H0zM15 0h14v14H15zM0 15h14v14H0zM15 15h14v14H15z" fill="url(#win)" /></svg>;
const TaskView = () => <svg width="28" height="34" viewBox="0 0 28 34"><rect x="8" y="0" width="18" height="22" rx="1" fill="#f7f5f5" stroke="#e8e6e6" /><rect x="2" y="15" width="20" height="18" rx="1" fill="#222" /><rect x="8" y="10" width="15" height="16" fill="#bbb" opacity=".9" /></svg>;
const Explorer = () => <svg width="30" height="34" viewBox="0 0 30 34"><path d="M1 6V2h11l3 4z" fill="#d99c15" /><rect x="1" y="6" width="29" height="27" fill="#f6c744" /><rect x="7" y="23" width="17" height="10" rx="1" fill="#1d7fd1" /><rect x="10" y="26" width="11" height="2" fill="#9ad0f5" /></svg>;
const Edge = () => <svg width="32" height="34" viewBox="0 0 32 34"><path d="M30 20C30 8 23 1 15 1 8 1 2 6 1 13c4-5 12-6 17-2 3 3 2 6 1 8h11z" fill="#2aa9dc" /><path d="M1 13c-1 9 4 18 14 19-5-3-7-8-6-12 1-5 6-7 9-9-5-4-13-3-17 2z" fill="#1464b4" /><path d="M15 32c6 1 12-2 15-7-6 3-11 2-14-1z" fill="#3bc76a" /><rect x="3" y="22" width="14" height="11" rx="1" fill="#a8672d" /><rect x="8" y="20" width="4" height="3" fill="none" stroke="#a8672d" /></svg>;
const Zoom = () => <svg width="30" height="32" viewBox="0 0 30 32"><rect width="30" height="32" rx="13" fill="#0b5cff" /><text x="15" y="19" textAnchor="middle" fontSize="8" fill="#fff" fontFamily={UI} fontWeight="700">zoom</text></svg>;
const Store = () => <svg width="30" height="34" viewBox="0 0 30 34"><path d="M9 8V3a2 2 0 0 1 2-2h8a2 2 0 0 1 2 2v5" fill="none" stroke="#2aa7e0" strokeWidth="2" /><path d="M1 8h28v22a3 3 0 0 1-3 3H4a3 3 0 0 1-3-3z" fill="#13518f" /><rect x="9" y="13" width="5" height="5" fill="#e8523c" /><rect x="15" y="13" width="5" height="5" fill="#5cb532" /><rect x="9" y="19" width="5" height="5" fill="#2aa7e0" /><rect x="15" y="19" width="5" height="5" fill="#f5b82e" /></svg>;
const WhatsApp = () => <svg width="32" height="32" viewBox="0 0 32 32" fill="none"><path d="M3 30l2-8A14 14 0 1 1 11 28z" fill="#f5f9f5" stroke="#27894e" strokeWidth="2.6" /><path d="M11 9c-3 2-1 7 3 10s7 4 9 1l-3-3-2 1c-2-1-3-3-4-5l1-2z" fill="#27894e" /></svg>;
const Sticky = () => <svg width="28" height="30" viewBox="0 0 28 30"><rect width="28" height="30" rx="2" fill="#3a3a3a" /><path d="M28 12v14a4 4 0 0 1-4 4h-8z" fill="#f7c80f" /></svg>;
const PBI = () => <svg width="30" height="34" viewBox="0 0 30 34"><rect x="0" y="0" width="28" height="34" fill="#5e6468" /><rect x="16" y="-2" width="14" height="36" fill="#d9a115" /><rect x="3" y="14" width="14" height="20" fill="#f2d66b" /></svg>;
const NoteDoc = () => <svg width="28" height="34" viewBox="0 0 28 34"><rect width="28" height="34" rx="2" fill="#fafafa" /><rect width="28" height="10" rx="2" fill="#1f6fd8" /><path d="M5 15h18M5 20h18M5 25h14" stroke="#ddd" strokeWidth="2" /></svg>;
const Chrome = ({ badge }: { badge: string }) => <svg width="42" height="42" viewBox="-4 0 42 42"><circle cx="17" cy="25" r="15" fill="#3aa757" /><path d="M17 10a15 15 0 0 1 13 7.500H17a7 7 0 0 0-6.500 4L4 13a15 15 0 0 1 13-3z" fill="#e54335" /><path d="M30 17.500a15 15 0 0 1-13 22.500l6.500-11a7 7 0 0 0-.5-11.500z" fill="#f8c22c" /><circle cx="17" cy="25" r="6" fill="#3f7ee8" stroke="#fff" strokeWidth="1.6" /><circle cx="28" cy="12" r="10.500" fill={badge} /></svg>;
const Notebook = () => <svg width="24" height="34" viewBox="0 0 24 34"><rect width="24" height="31" y="1" fill="#5cc3de" rx="1" /><rect y="30" width="24" height="4" fill="#7d5a3c" /><path d="M5 12h14M5 18h14M5 24h14" stroke="#14506e" strokeWidth="2" /><path d="M4 0v4M9 0v4M14 0v4M19 0v4" stroke="#1a5c7a" strokeWidth="2" /></svg>;
const WeChat = () => <svg width="32" height="32" viewBox="0 0 32 32"><ellipse cx="12" cy="12" rx="11" ry="10" fill="#2dc84d" /><path d="M5 19l-1 5 6-3z" fill="#2dc84d" /><ellipse cx="22" cy="20" rx="9" ry="8" fill="#f5f5f5" stroke="#ddd" /><circle cx="8" cy="10" r="1.500" fill="#134" /><circle cx="16" cy="10" r="1.500" fill="#134" /></svg>;
const Battery = () => <svg width="22" height="22" viewBox="0 0 22 22" fill="none" stroke="#252423" strokeWidth="1.4"><rect x="2" y="7" width="16" height="12" rx="2" fill="#252423" /><path d="M20 10v6M6 1L3 8h4l-2 6" stroke="#252423" /></svg>;

const RibbonBtn = ({ w, icon, l1, l2, off, caret }: { w: number; icon: React.ReactNode; l1: string; l2?: string; off?: boolean; caret?: boolean }) => (
  <RItem $w={w} $off={off}>
    <RIcon>{icon}</RIcon>
    <RLine>{l1}</RLine>
    {l2 !== undefined && <RLine>{l2}{caret && <ChevronDown size={9} strokeWidth={2.5} />}</RLine>}
  </RItem>
);

const Filt = ({ title, x, w, y }: { title: string; x: number; w: number; y: number }) => (
  <Visual $x={x} $y={y} $w={w + 5}>
    <Heading>{title}</Heading>
  </Visual>
);
const Drop = ({ x, w, y }: { x: number; w: number; y: number }) => (
  <Visual $x={x} $y={y} $w={w} $h={27}><Dropdown>All<ChevronDown size={18} strokeWidth={1} color="#605e5c" /></Dropdown></Visual>
);

type Row = { h: number; id: string; name: string; city: string; rev: number; revT: string; rp: string; occ: string; adr: string; ds: string; db: string; du: string; re: string; ca: string; av: string };
const R = (h: number, id: string, name: string, city: string, rev: number, revT: string, rp: string, occ: string, adr: string, ds: string, db: string, du: string, re: string, ca: string, av: string): Row => ({ h, id, name, city, rev, revT, rp, occ, adr, ds, db, du, re, ca, av });
const rows: Row[] = [
  R(31, "16559", "Atliq\nExotica", "Mumbai", 48, "117.0M", "10629", "65.85%", "16,141.36", "121", "80", "56", "70.39%", "24.63%", "4.32"),
  R(18, "18562", "Atliq Bay", "Hyderabad", 28, "68.4M", "6216", "65.81%", "9,445.93", "121", "80", "56", "70.20%", "24.68%", "4.31"),
  R(30, "16563", "Atliq\nPalace", "Delhi", 37, "88.0M", "8269", "66.25%", "12,480.45", "117", "78", "54", "70.02%", "25.19%", "4.27"),
  R(18, "18560", "Atliq City", "Hyderabad", 25, "60.2M", "6068", "66.07%", "9,185.42", "109", "72", "51", "70.91%", "24.13%", "4.26"),
  R(16, "18561", "Atliq Blu", "Hyderabad", 23, "55.3M", "5679", "65.46%", "8,675.98", "107", "70", "49", "70.36%", "24.27%", "4.25"),
  R(32, "17563", "Atliq\nPalace", "Mumbai", 41, "100.2M", "10592", "66.13%", "16,016.18", "104", "69", "49", "70.67%", "24.38%", "4.29"),
  R(30, "17559", "Atliq\nExotica", "Mumbai", 39, "92.9M", "10107", "66.09%", "15,293.13", "101", "67", "47", "70.81%", "24.04%", "4.32"),
  R(19, "17560", "Atliq City", "Mumbai", 36, "86.9M", "7763", "53.07%", "14,628.63", "123", "65", "45", "69.51%", "25.12%", "3.04"),
  R(17, "19560", "Atliq City", "Bangalore", 33, "80.8M", "8965", "65.53%", "13,679.71", "99", "65", "45", "69.00%", "26.46%", "4.28"),
  R(17, "19562", "Atliq Bay", "Bangalore", 34, "81.4M", "9312", "65.66%", "14,183.02", "96", "63", "44", "70.47%", "24.29%", "4.28"),
  R(17, "19561", "Atliq Blu", "Bangalore", 30, "72.1M", "6774", "53.25%", "12,722.07", "117", "62", "43", "69.80%", "24.64%", "3.08"),
  R(17, "19563", "Atliq", "Bangalore", 28, "67.7M", "6768", "53.42%", "12,670.40", "110", "59", "41", "69.50%", "25.36%", "3.02"),
];
const heads: [string, number][] = [["property\n_id", 5], ["property_\nname", 8], ["city", 4], ["Revenue", 0], ["RevPAR", 9], ["Occupancy\n%", 6], ["ADR", 5], ["DSRN", 5], ["DBRN", 8], ["DURN", 6], ["Realisation %", 6], ["Cancellation %", 6], ["Average\nRating", 0]];
const pr = [2, 0, 0, 2, 5, 5, 5, 5, 5, 5, 5, 11, 5];

const xs = [968, 994, 1020, 1047, 1073, 1099, 1125, 1151, 1177, 1203, 1230, 1256, 1282, 1308];
const wk = ["32", "29", "24", "27", "20", "28", "22", "25", "19", "23", "31", "21", "30", "26"];
const adrTop = [1, 1, 0, 1, 0, 1, 1, 1, 0, 1, 1, 0, 1, 0];
const revY = [396, 399, 399, 399, 399, 399, 399, 399, 399, 410, 410, 410, 410, 411];
const revLab = ["8K", "8K", "8K", "8K", "8K", "8K", "8K", "8K", "8K", "7K", "7K", "6K", "6K", "6K"];
const revLabY = [383, 388, 388, 388, 388, 388, 388, 388, 388, 399, 399, 399, 399, 423];

const TrendChart = () => (
  <ChartSvg width={430} height={225} viewBox="900 305 430 225">
    <circle cx="909" cy="320" r="5" fill={BLUE} /><text x="916" y="324" fontSize="10.5">RevPAR</text>
    <circle cx="963" cy="320" r="5" fill="#12239e" /><text x="970" y="324" fontSize="10.5">ADR</text>
    <circle cx="1001" cy="320" r="5" fill="#37d85f" /><text x="1008" y="324" fontSize="10.5">Occupancy %</text>
    <text x="947" y="387" fontSize="12" textAnchor="end">1000K%</text>
    <text x="947" y="467" fontSize="12" textAnchor="end">0K%</text>
    <path d="M952 383h366M952 462h366" stroke="#ccc" strokeDasharray="1 3" />
    <polyline points={xs.map(x => `${x},361`).join(" ")} stroke="#12239e" strokeWidth="2.4" strokeDasharray="5 5" fill="none" />
    <polyline points={xs.map((x, i) => `${x},${revY[i]}`).join(" ")} stroke={BLUE} strokeWidth="3" strokeDasharray="7 5" fill="none" />
    <polyline points={xs.map(x => `${x},462`).join(" ")} stroke="#37d85f" strokeWidth="3" strokeDasharray="5 4" fill="none" />
    {xs.map((x, i) => (
      <g key={x}>
        <circle cx={x} cy="361" r="3" fill="#000" />
        <circle cx={x} cy={revY[i]} r="3" fill="#000" />
        <circle cx={x} cy="462" r="3" fill="#000" />
        <text x={x} y={adrTop[i] ? 356 : 375} fontSize="10.5" textAnchor="middle">13K</text>
        <text x={x} y={revLabY[i] + 4} fontSize="10.5" textAnchor="middle">{revLab[i]}</text>
        <text x={x} y={i === 13 ? 463 : 455} fontSize="10.5" textAnchor="middle">0K%</text>
        <text x={x} y="488" fontSize="11.5" textAnchor="middle">W</text>
        <text x={x} y="505" fontSize="11.5" textAnchor="middle">{wk[i]}</text>
      </g>
    ))}
    <text x="1138" y="520" fontSize="10.5" textAnchor="middle">week no</text>
  </ChartSvg>
);

const Donut = () => (
  <ChartSvg width={150} height={150} viewBox="595 310 150 150">
    <path d="M693 339.500A44.500 44.500 0 0 1 693 428.500" fill="none" stroke={BLUE} strokeWidth="23" />
    <path d="M693 428.500A44.500 44.500 0 0 1 693 339.500" fill="none" stroke="#4bd60a" strokeWidth="23" />
    <text x="598" y="337" fontSize="11">57.66%</text>
    <text x="598" y="351" fontSize="11">(49.7...)</text>
    <path d="M637 340h10l6 5M735 428l4 2h10" stroke="#bbb" fill="none" />
  </ChartSvg>
);

const GaugeText = styled.text`font-family:${DIN} !important;font-weight:300;font-size:23px;fill:#605e5c;`;
const Gauge = () => (
  <ChartSvg width={150} height={75} viewBox="439 390 150 75">
    <path d="M444 463A70 70 0 0 1 584 463H563A49 49 0 0 0 465 463Z" fill="#f0f0f0" />
    <path d="M444 463A70 70 0 0 1 555.400 406.600L543 423.500A49 49 0 0 0 465 463Z" fill={BLUE} />
    <GaugeText x="514" y="459" textAnchor="middle">70.15%</GaugeText>
  </ChartSvg>
);

const barX = [185, 234, 283, 332, 381, 430, 480];
const linePts = [[203, 764], [252, 793], [301, 799], [350, 728], [400, 769], [448, 782], [497, 732]];
const cats = ["logtrip", "journey", "direct ...", "direct ...", "others", "makey...", "tripster"];
const catX = [199, 248, 297, 346, 394, 443, 492];
const Combo = () => (
  <ChartSvg width={496} height={224} viewBox="109 662 496 224">
    <circle cx="120" cy="701" r="5" fill={BLUE} /><text x="127" y="705" fontSize="12">Realisation %</text>
    <circle cx="209" cy="701" r="5" fill="#12239e" /><text x="217" y="705" fontSize="12">ADR</text>
    <text transform="translate(123 769) rotate(-90)" fontSize="10.5" fontWeight="600" textAnchor="middle" style={{ fill: "#444" }}>Realisation %</text>
    <text transform="translate(598 769) rotate(-90)" fontSize="10.5" textAnchor="middle" style={{ fill: "#333" }}>ADR</text>
    <text x="155" y="769" fontSize="12.5" textAnchor="end">50%</text>
    <text x="155" y="819" fontSize="12.5" textAnchor="end">0%</text>
    <text x="546" y="728" fontSize="12.5">12,800</text>
    <text x="546" y="774" fontSize="12.5">12,700</text>
    <text x="546" y="819" fontSize="12.5">12,600</text>
    <path d="M165 764h360M165 815h360M520 724h15" stroke="#ccc" strokeDasharray="1 4" />
    {barX.map(x => <rect key={x} x={x} y="743" width="35" height="72" fill={BLUE} />)}
    <polygon points={`203,815 ${linePts.map(p => p.join(",")).join(" ")} 497,815`} fill="#12239e" fillOpacity=".3" />
    <polyline points={linePts.map(p => p.join(",")).join(" ")} fill="none" stroke="#12239e" strokeWidth="3" />
    {linePts.slice(0, 6).map(p => <circle key={p[0]} cx={p[0]} cy={p[1]} r="4" fill="#12239e" />)}
    {[[168, 774, 70, 19], [266, 770, 71, 20], [408, 759, 70, 20], [413, 792, 71, 19]].map(b => <rect key={b[0]} x={b[0]} y={b[1]} width={b[2]} height={b[3]} rx="4" fill="#fff" fillOpacity=".72" />)}
    {[203, 301, 399, 497].map(c => <rect key={c} x={c - 39} y="722" width="78" height="30" rx="4" fill="#fff" fillOpacity=".68" />)}
    {[[203, "70.59%"], [301, "70.27%"], [399, "70.07%"], [497, "69.83%"]].map(([c, t]) => (
      <g key={c as number}>
        <text x={c as number} y="735" fontSize="10.5" textAnchor="middle">Realisation %</text>
        <text x={c as number} y="749" fontSize="10.5" textAnchor="middle">{t as string}</text>
      </g>
    ))}
    <text x="203" y="788" fontSize="11" textAnchor="middle">ADR 12710</text>
    <text x="301" y="784" fontSize="11" textAnchor="middle">ADR 12634</text>
    <text x="443" y="773" fontSize="11" textAnchor="middle">ADR 12700</text>
    <text x="448" y="805" fontSize="11" textAnchor="middle">ADR 12671</text>
    {cats.map((c, i) => <text key={i} transform={`translate(${catX[i]} 826) rotate(-40)`} fontSize="12" textAnchor="end">{c}</text>)}
    <text x="350" y="880" fontSize="10.5" textAnchor="middle" fontWeight="500" style={{ fill: "#444" }}>booking_platform</text>
  </ChartSvg>
);

export default function App() {
  return (
    <>
      <Global />
      <Shell>
        <TitleBar>
          <TitleLeft>
            <SaveIco />
            <QAT $ml={20} $w={16}><UndoIco /></QAT>
            <QAT $ml={21} $w={18}><RedoIco /></QAT>
            <DocTitle>assignment 2 for pbi&nbsp; •&nbsp; Last saved: Today at 10:13 PM</DocTitle>
            <Caret />
          </TitleLeft>
          <TitleSearch><Search size={21} strokeWidth={1.3} style={{ transform: "scaleX(-1)" }} />Search</TitleSearch>
          <TitleRight>
            <UserName>Rezaul Islam</UserName>
            <Avatar><AvatarIco /></Avatar>
            <WinBtn $w={16} $mr={40}><Minus size={16} strokeWidth={1.6} /></WinBtn>
            <WinBtn $w={13} $mr={41}><Square size={14} strokeWidth={1.6} /></WinBtn>
            <WinBtn $w={15} $mr={0}><X size={17} strokeWidth={1.4} /></WinBtn>
          </TitleRight>
        </TitleBar>

        <TabsRow>
          {([["File", 73], ["Home", 87, true], ["Insert", 83], ["Modeling", 113], ["View", 76], ["Optimize", 110], ["Help", 60]] as [string, number, boolean?][]).map(([t, w, on]) => (
            <Tab key={t} $w={w}><TabLabel $on={on}>{t}</TabLabel></Tab>
          ))}
          <ShareBtn><ShareIco />Share<ChevronDown size={16} strokeWidth={1.6} /></ShareBtn>
        </TabsRow>

        <Ribbon>
          <Group $w={200}>
            <GroupItems>
              <RibbonBtn w={58} icon={<PasteIco />} l1="Paste" off />
              <ClipList>
                <ClipRow><Scissors size={18} strokeWidth={1} />Cut</ClipRow>
                <ClipRow><Copy size={18} strokeWidth={1} />Copy</ClipRow>
                <ClipRow><Paintbrush size={18} strokeWidth={1} color="#d8b48a" />Format painter</ClipRow>
              </ClipList>
            </GroupItems>
            <GroupLabel>Clipboard</GroupLabel>
          </Group>
          <Group $w={450}>
            <GroupItems>
              <RibbonBtn w={60} icon={<GetDataIco />} l1="Get" l2="data" caret />
              <RibbonBtn w={60} icon={<ExcelIco />} l1="Excel" l2="workbook" />
              <RibbonBtn w={78} icon={<OneLakeIco />} l1="OneLake" l2="catalog" caret />
              <RibbonBtn w={40} icon={<SqlIco />} l1="SQL" l2="Server" />
              <RibbonBtn w={62} icon={<EnterIco />} l1="Enter" l2="data" />
              <RibbonBtn w={58} icon={<DataverseIco />} l1="Dataverse" />
              <RibbonBtn w={78} icon={<RecentIco />} l1="Recent" l2="sources" caret />
            </GroupItems>
            <GroupLabel>Data</GroupLabel>
          </Group>
          <Group $w={144}>
            <GroupItems>
              <RibbonBtn w={76} icon={<TransformIco />} l1="Transform" l2="data" caret />
              <RibbonBtn w={50} icon={<RefreshIco />} l1="Refresh" />
            </GroupItems>
            <GroupLabel>Queries</GroupLabel>
          </Group>
          <Group $w={183}>
            <GroupItems>
              <RibbonBtn w={60} icon={<NewVisualIco />} l1="New" l2="visual" />
              <RibbonBtn w={40} icon={<TextBoxIco />} l1="Text" l2="box" />
              <RibbonBtn w={72} icon={<MoreVisIco />} l1="More" l2="visuals" caret />
            </GroupItems>
            <GroupLabel>Insert</GroupLabel>
          </Group>
          <Group $w={233}>
            <GroupItems>
              <RibbonBtn w={100} off icon={<CalcVisIco />} l1="New visual" l2="calculation" caret />
              <RibbonBtn w={52} icon={<NewMeasureIco />} l1="New" l2="measure" />
              <RibbonBtn w={70} icon={<QuickIco />} l1="Quick" l2="measure" />
            </GroupItems>
            <GroupLabel>Calculations</GroupLabel>
          </Group>
          <Group $w={93}>
            <GroupItems>
              <RibbonBtn w={80} off icon={<SensIco />} l1="Sensitivity" l2="" caret />
            </GroupItems>
            <GroupLabel>Sensitivity</GroupLabel>
          </Group>
          <Group $w={73}>
            <GroupItems>
              <RibbonBtn w={60} icon={<PublishIco />} l1="Publish" />
            </GroupItems>
            <GroupLabel>Share</GroupLabel>
          </Group>
          <Group $w={74}>
            <GroupItems>
              <RibbonBtn w={62} icon={<CopilotIco />} l1="Copilot" />
            </GroupItems>
            <GroupLabel>Copilot</GroupLabel>
          </Group>
          <Collapse><ChevronUp size={15} strokeWidth={2} /></Collapse>
        </Ribbon>

        <Body>
          <Rail>
            <RailItem $on><ReportIco /></RailItem>
            <RailItem><TableIco /></RailItem>
            <RailItem><ModelIco /></RailItem>
            <RailItem><DaxIco /></RailItem>
          </Rail>
          <Center>
            <CanvasRow>
              <Canvas>
                <Page>
                  <Filt title="Fillter By City" x={114} y={212} w={120} />
                  <Drop x={119} y={242} w={153} />
                  <Filt title="Fillter By Room Type" x={288} y={212} w={165} />
                  <Drop x={293} y={242} w={153} />
                  <Filt title="Filter by room class" x={455} y={213} w={160} />
                  <Drop x={460} y={243} w={156} />

                  <Visual $x={628} $y={205} $w={79} $h={62}><Chip>May 25</Chip></Visual>
                  <Visual $x={716} $y={205} $w={79} $h={62}><Chip>Jun 25</Chip></Visual>
                  <Visual $x={803} $y={205} $w={80} $h={62}><Chip>Jul 25</Chip></Visual>
                  <Filt title="week no" x={904} y={201} w={100} />
                  <Visual $x={904} $y={224} $w={86} $h={43}><Chip>W 19</Chip></Visual>
                  <Visual $x={999} $y={224} $w={86} $h={43}><Chip>W 20</Chip></Visual>
                  <Visual $x={1094} $y={224} $w={87} $h={43}><Chip>W 21</Chip></Visual>
                  <Visual $x={1189} $y={224} $w={86} $h={43}><Chip>W 22</Chip></Visual>
                  <Visual $x={1282} $y={224} $w={9} $h={21}><ThumbV /></Visual>

                  <Visual $x={143} $y={274} $w={120}><Heading $center>Revenue</Heading></Visual>
                  <Visual $x={143} $y={310} $w={120}><BigValue $size={21}>2bn</BigValue></Visual>
                  <Visual $x={332} $y={280} $w={120}><Heading $center>Revpar</Heading></Visual>
                  <Visual $x={332} $y={313} $w={120}><BigValue $size={27}>7.35K</BigValue></Visual>
                  <Visual $x={453} $y={280} $w={120}><Heading $center>DSRN</Heading></Visual>
                  <Visual $x={453} $y={309} $w={120}><BigValue $size={27}>2.53K</BigValue></Visual>
                  <Visual $x={329} $y={360} $w={120}><Heading $center>ADR</Heading></Visual>
                  <Visual $x={329} $y={389} $w={120}><BigValue $size={27}>12.70K</BigValue></Visual>
                  <Visual $x={444} $y={360} $w={140}><Heading $center>Realisation %</Heading></Visual>
                  <Visual $x={439} $y={390} $w={150} $h={75}><Gauge /></Visual>

                  <Visual $x={115} $y={368} $w={161} $h={56}>
                    <WowTitle>Revenue WoW change %</WowTitle>
                    <WowUp />
                    <WowRow>
                      <svg width="24" height="26" viewBox="0 0 24 26" fill="none" stroke="#2f7d3b" strokeWidth="2.2"><path d="M12 0v23M9 0v16H2l10 9 10-9h-7V0" fill="#5a9e65" /></svg>
                      -0.82
                    </WowRow>
                  </Visual>
                  <Visual $x={285} $y={366} $w={6} $h={57}><ThumbV /></Visual>

                  <Visual $x={125} $y={499} $w={317}>
                    <SmallWrap>
                      <SmallRow $h={29} $line $pb={8}>
                        <SmallCell $b $fs={13}>day_type</SmallCell>
                        <SmallCell $r $b $fs={13}>Occupancy %</SmallCell>
                        <SmallCell $b $fs={13}>RevPAR<SortMark /></SmallCell>
                        <SmallCell $r $b $fs={13} $pr={2}>Realisation %</SmallCell>
                      </SmallRow>
                      <SmallRow $h={20}><SmallCell>weekend</SmallCell><SmallCell $r>62.64%</SmallCell><SmallCell $r>7,971.63</SmallCell><SmallCell $r $pr={1}>70.59%</SmallCell></SmallRow>
                      <SmallRow $h={22} $alt $line><SmallCell>weekday</SmallCell><SmallCell $r>55.99%</SmallCell><SmallCell $r>7,101.15</SmallCell><SmallCell $r $pr={1}>69.95%</SmallCell></SmallRow>
                      <SmallRow $h={23}><SmallCell $b>Total</SmallCell><SmallCell $r $b>57.87%</SmallCell><SmallCell $r $b>7,347.15</SmallCell><SmallCell $r $b $pr={1}>70.15%</SmallCell></SmallRow>
                    </SmallWrap>
                    <HScroll />
                  </Visual>

                  <Filt title="Occupancy % by category" x={594} y={283} w={220} />
                  <Visual $x={595} $y={310} $w={150} $h={150}><Donut /></Visual>
                  <Visual $x={754} $y={417} $w={40} $h={28}><ChartSvg width={40} height={28} viewBox="0 0 40 28"><text x="0" y="10" fontSize="11">58.21%</text><text x="0" y="24" fontSize="11">(50.2...)</text></ChartSvg></Visual>
                  <Visual $x={790} $y={350} $w={70} $h={70}>
                    <ChartSvg width={70} height={70} viewBox="790 350 70 70">
                      <text x="793" y="366" fontSize="12.5" fontWeight="700">category</text>
                      <circle cx="798" cy="381" r="5" fill={BLUE} /><text x="806" y="386" fontSize="12.5">Business</text>
                      <circle cx="798" cy="407" r="5" fill="#4bd60a" /><text x="806" y="412" fontSize="12.5">Luxury</text>
                    </ChartSvg>
                  </Visual>

                  <Filt title="Trends by key Metrics" x={904} y={283} w={220} />
                  <Visual $x={900} $y={305} $w={430} $h={225}><TrendChart /></Visual>

                  <Visual $x={605} $y={552} $w={775} $h={334}>
                    <BigTable>
                      <BigHead $h={40}>
                        {heads.map(([t, pl], i) => <HeadCell key={t} $pl={pl}>{t}{i === 9 && <DurnMark />}</HeadCell>)}
                      </BigHead>
                      <BigBody>
                        {rows.map((r, i) => (
                          <BigRow key={r.id} $h={r.h} $alt={i % 2 === 1}>
                            <BigCell $r $pr={pr[0]}>{r.id}</BigCell>
                            <BigCell $pl={8}>{r.name}</BigCell>
                            <BigCell $pl={4}>{r.city}</BigCell>
                            <BigCell $r $pr={2}><DataBar style={{ width: r.rev }} /><CellText>{r.revT}</CellText></BigCell>
                            <BigCell $r $pr={5}>{r.rp}</BigCell>
                            <BigCell $r $pr={5}>{r.occ}</BigCell>
                            <BigCell $r $pr={5}>{r.adr}</BigCell>
                            <BigCell $r $pr={5}>{r.ds}</BigCell>
                            <BigCell $r $pr={5}>{r.db}</BigCell>
                            <BigCell $r $pr={5}>{r.du}</BigCell>
                            <BigCell $r $pr={5}>{r.re}</BigCell>
                            <BigCell $r $pr={11}>{r.ca}</BigCell>
                            <BigCell $r $pr={5}><DataBar style={{ width: (parseFloat(r.av) / 4.32) * 44 }} /><CellText>{r.av}</CellText></BigCell>
                          </BigRow>
                        ))}
                      </BigBody>
                      <BigTotal $h={34}>
                        {["Total", "", "", "1687.8M", "7337", "57.79%", "12,695.7\n5", "2528", "1461", "1025", "70.14%", "24.84%", "3.62"].map((t, i) => (
                          <BigCell key={i} $b $r $pr={pr[i]}>{t}</BigCell>
                        ))}
                      </BigTotal>
                    </BigTable>
                  </Visual>
                  <Visual $x={1366} $y={558} $w={7} $h={134}><ThumbV /></Visual>

                  <Visual $x={509} $y={636} $w={88} $h={22}>
                    <VizIconsRow>
                      <Funnel size={21} strokeWidth={1.1} />
                      <svg width="18" height="18" viewBox="0 0 18 18" fill="none" stroke="#605e5c" strokeWidth="1.2"><path d="M1 8V1h9M1 10h8v7H1zM9 17h8V9M11 7l6-6M12 1h5v5" /></svg>
                      <Ellipsis size={20} strokeWidth={2} />
                    </VizIconsRow>
                  </Visual>
                  <Visual $x={109} $y={662} $w={496} $h={224}>
                    <ComboBox />
                  </Visual>
                  <Visual $x={109} $y={662} $w={496} $h={224}><Combo /></Visual>
                  <Filt title="Realisation % and ADR by booking_platform" x={114} y={662} w={360} />
                </Page>
              </Canvas>
              <FilterPane>
                <ChevronsLeft size={22} strokeWidth={1.2} />
                <FilterIcon><svg width="16" height="16" viewBox="0 0 16 16" fill="none" stroke="#3b3a39" strokeWidth="1.2"><path d="M15 1v14L9 10H1l8-2z" /></svg></FilterIcon>
                <FilterText>Filters</FilterText>
              </FilterPane>
            </CanvasRow>
            <PageBar>
              <DeviceBtn $w={54} $on><Monitor size={24} strokeWidth={1} color="#484644" /><DeviceMark /></DeviceBtn>
              <DeviceBtn $w={56}><Smartphone size={26} strokeWidth={1} color="#484644" /></DeviceBtn>
              <Arrow $w={20} />
              <Arrow $w={30} $flip />
              <PageTab $w={94} $on>Page 1<TabClose>x</TabClose></PageTab>
              <PageTab $w={107}>Revenue</PageTab>
              <AddTab><Plus size={20} strokeWidth={3} /></AddTab>
            </PageBar>
          </Center>
          <VizPane>
            <PaneHead $pl={9}>Visualizations<ChevronsRight size={22} strokeWidth={1.2} /></PaneHead>
            <SubHead>Build visual</SubHead>
            <BuildRow>
              <BuildOn>
                <svg width="32" height="32" viewBox="0 0 32 32"><path d="M5 2h24" stroke="#333" /><rect x="4" y="7" width="26" height="10" fill={GREEN} stroke="#222" strokeDasharray="2 1" /><rect x="4" y="21" width="26" height="10" fill={GREEN} stroke="#222" strokeDasharray="2 1" /></svg>
              </BuildOn>
              <BuildDoc>
                <svg width="32" height="32" viewBox="0 0 32 32" fill="none" stroke="#333" strokeWidth="1.2"><path d="M5 30H1V1h13l6 7v6M14 1v7h6" /><path d="M10 31c4 0 5-2 6-5l12-13c2-1 3 1 2 2L18 28" /></svg>
              </BuildDoc>
            </BuildRow>
            <Notch />
            <VizGrid>
              {viz.map((v, i) => <VizCell key={i}><V>{v}</V></VizCell>)}
            </VizGrid>
            <More><Ellipsis size={22} strokeWidth={1.5} /></More>
            <Divider />
            <WellLabel $mt={11}>Values</WellLabel>
            <Well $h={35} $pl={13} $mt={6}>Add data fields here</Well>
            <WellLabel $b $mt={14}>Tooltip</WellLabel>
            <KeepRow>Keep all filters<Toggle>On</Toggle></KeepRow>
            <Well $h={32} $pl={10} $mt={14}>Drag tooltip fields here</Well>
          </VizPane>
          <DataPane>
            <PaneHead $pl={12}>Data<ChevronsRight size={22} strokeWidth={1.2} /></PaneHead>
            <DataSearch><Search size={18} strokeWidth={1.2} />Search</DataSearch>
            <TreeList>
              {["key_measures", "dim_date", "dim_hotels", "dim_rooms", "fact_aggregated_book...", "fact_bookings"].map((t, i) => (
                <TreeRow key={t}><ChevronRight size={18} strokeWidth={1.2} /><TreeIcon>{i === 0 ? <MeasureIco /> : <DataIco />}</TreeIcon><TreeText>{t}</TreeText></TreeRow>
              ))}
            </TreeList>
          </DataPane>
        </Body>

        <StatusBar>
          Page 1 of 2
          <Zoomer>
            <Minus size={8} strokeWidth={3} />
            <SliderTrack />
            <Plus size={14} strokeWidth={2} />
            <Pct>82%</Pct>
            <FitBox><svg width="13" height="11" viewBox="0 0 13 11" fill="none" stroke="#605e5c"><path d="M0 3V0h3M10 0h3v3M13 8v3h-3M3 11H0V8" /></svg></FitBox>
          </Zoomer>
        </StatusBar>

        <Taskbar>
          <Weather>
            <Sun><Badge>4</Badge></Sun>
            <WeatherText>26°C<Muted>Sunny</Muted></WeatherText>
          </Weather>
          <StartBtn><WinIco /></StartBtn>
          <SearchPill><Search size={20} strokeWidth={2} color="#222" style={{ transform: "scaleX(-1)" }} />Search</SearchPill>
          <TaskIcon><TaskView /></TaskIcon>
          <TaskIcon><Explorer /><RunDot /></TaskIcon>
          <TaskIcon><Edge /></TaskIcon>
          <TaskIcon><Zoom /></TaskIcon>
          <TaskIcon><Store /></TaskIcon>
          <TaskIcon><WhatsApp /><RunDot /></TaskIcon>
          <TaskIcon><Sticky /></TaskIcon>
          <TaskIcon $active><PBI /><RunDot $active /></TaskIcon>
          <TaskIcon><NoteDoc /></TaskIcon>
          <TaskIcon><Chrome badge="#5a4a3e" /><RunDot /></TaskIcon>
          <TaskIcon><Notebook /><RunDot /></TaskIcon>
          <TaskIcon><Chrome badge="#2a1a1e" /><RunDot /></TaskIcon>
          <TaskIcon><WeChat /><RunDot /></TaskIcon>
          <Tray>
            <ChevronUp size={20} strokeWidth={1.5} />
            <TrayLang>ENG<br />US</TrayLang>
            <TraySlot $w={30}><Wifi size={21} strokeWidth={1.5} /></TraySlot>
            <TraySlot $w={30}><Volume2 size={21} strokeWidth={1.3} /></TraySlot>
            <TraySlot $w={30}><Battery /></TraySlot>
            <Clock>10:14 pm<br />12/4/2025</Clock>
          </Tray>
        </Taskbar>
      </Shell>
    </>
  );
}
